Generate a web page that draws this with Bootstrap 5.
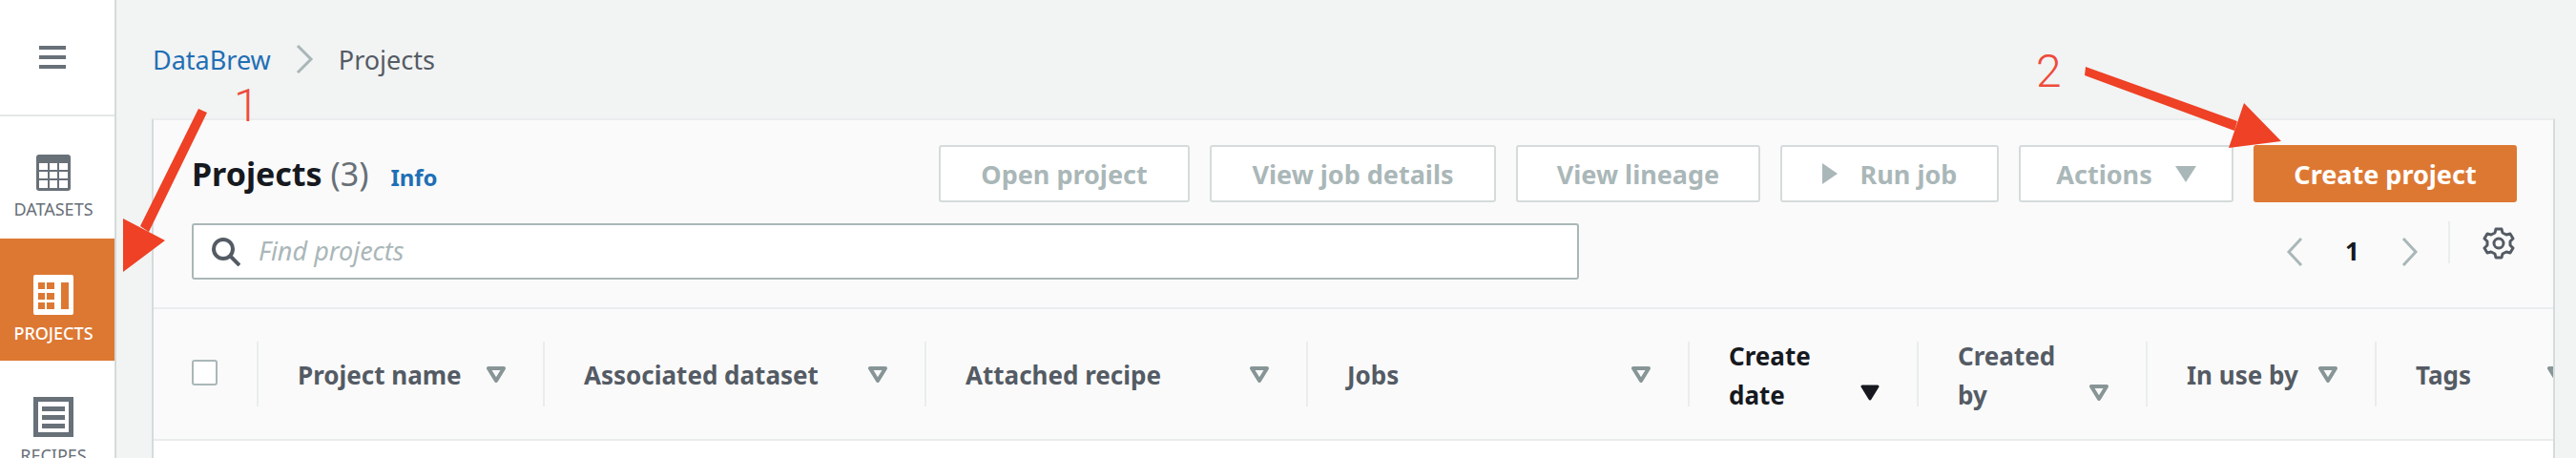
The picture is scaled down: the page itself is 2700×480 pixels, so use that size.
<!DOCTYPE html>
<html lang="en">
<head>
  <meta charset="UTF-8">
  <meta name="viewport" content="width=device-width, initial-scale=1.0">
  <title>Projects</title>
  <link rel="stylesheet" href="https://cdn.jsdelivr.net/npm/bootstrap@5.3.3/dist/css/bootstrap.min.css">
  <style>
    html, body { height: 480px; overflow: hidden; }
    body { font-family: "Noto Sans", "Open Sans", sans-serif; background: #f2f3f3; color: #16191f; position: relative; }
    .side { width: 122px; height: 480px; background: #fff; border-right: 2px solid #d5dbdb; flex: none; overflow: hidden; }
    .side-top { height: 122px; border-bottom: 2px solid #e4e7e7; padding-right: 10px; }
    .side-item { height: 128px; flex: none; color: #687078; font-size: 18px; line-height: 22px; padding: 38px 8px 0 0; }
    .side-item svg { display: block; margin-bottom: 8px; flex: none; }
    .side-first { padding-top: 40px; }
    .side-on { background: #dd7833; color: #fff; font-weight: 500; }
    .main-col { width: 2578px; min-width: 0; flex: none; }
    .crumbs { height: 124px; padding: 45px 0 0 38px; font-size: 27px; line-height: 36px; color: #545b64; }
    .crumbs a { color: #1f6fb5; text-decoration: none; }
    .crumb-gap { margin: 1px 26px 0 25px; flex: none; }
    .panel-box { margin: 0 22px 0 37px; height: 356px; background: #fff; border-left: 2px solid #d5dbdb; border-right: 2px solid #d5dbdb; border-top: 2px solid #eaeded; overflow: hidden; }
    .panel-head { height: 198px; background: #fafafa; border-bottom: 2px solid #eaeded; padding: 26px 40px 0 40px; }
    .title-txt { height: 60px; font-size: 34px; line-height: 60px; font-weight: 700; white-space: nowrap; }
    .title-txt span { font-weight: 400; color: #687078; }
    .info-link { font-size: 24px; font-weight: 700; color: #1f6fb5; text-decoration: none; margin-left: 23px; }
    .btn-row { gap: 21px; margin-right: -2px; }
    .btn-aws { height: 60px; flex: none; font-size: 27px; line-height: 1; font-weight: 700; padding: 0; border-radius: 3px; background: #fff; border: 2px solid #d5dbdb; color: #aab7b8; }
    .btn-aws:disabled { opacity: 1; background: #fff; border-color: #d5dbdb; color: #aab7b8; }
    .btn-make { background: #dd7833; border-color: #dd7833; color: #fff; }
    .btn-make:hover { background: #dd7833; border-color: #dd7833; color: #fff; }
    .find-box { width: 1454px; height: 59px; background: #fff; border: 2px solid #aab7b8; border-radius: 3px; padding-left: 19px; margin-top: 22px; }
    .find-box input { border: 0; outline: 0; background: transparent; width: 1300px; font-size: 27px; font-style: italic; color: #16191f; margin-left: 19px; padding: 0; }
    .find-box input::placeholder { color: #aab7b8; opacity: 1; }
    .pager { margin-top: 20px; font-size: 26px; font-weight: 700; line-height: 30px; }
    .pager-num { width: 101px; text-align: center; }
    .pager-sep { width: 2px; height: 44px; background: #eaeded; margin: 0 34px 0 30px; }
    .gear-pos { margin-top: 6px; }
    .head-row { height: 138px; background: #fafafa; border-bottom: 2px solid #eaeded; }
    .check-cell { width: 108px; flex: none; padding-left: 40px; }
    .check-box { width: 27px; height: 27px; background: #fff; border: 2px solid #aab7b8; border-radius: 3px; margin-top: -4px; }
    .col-cell { height: 68px; flex: none; border-left: 2px solid #eaeded; padding: 0 39px 0 41px; font-size: 26px; font-weight: 700; line-height: 41px; color: #545b64; white-space: nowrap; }
    .col-cell span { padding-top: 2px; }
    .col-on { color: #16191f; }
    .col-cell svg { flex: none; }
    .cell-two svg { margin-bottom: 6px; }
    .cell-two span { margin-bottom: -9px; }
    .w-300 { width: 300px; }
    .w-400 { width: 400px; }
    .w-240 { width: 240px; }
    .note-layer { position: absolute; left: 0; top: 0; width: 2700px; height: 480px; pointer-events: none; }
    .note-num { position: absolute; font-family: Roboto, "Liberation Sans", sans-serif; font-weight: 300; font-size: 48px; line-height: 48px; color: #ee4b3a; }
    .note-a { left: 245px; top: 87px; }
    .note-b { left: 2134px; top: 51px; }
  </style>
</head>
<body>
  <div class="d-flex">
    <div class="side">
      <div class="side-top d-flex align-items-center justify-content-center">
        <svg width="28" height="24" viewBox="0 0 28 24"><path fill="#687078" d="M0 0h28v4H0zM0 10h28v4H0zM0 20h28v4H0z"/></svg>
      </div>
      <div class="side-item side-first d-flex flex-column align-items-center">
        <svg width="36" height="38" viewBox="0 0 36 38"><rect width="36" height="38" rx="3" fill="#687078"/><path fill="#fff" d="M3 9h9v7H3zM14 9h8v7h-8zM24 9h9v7h-9zM3 18h9v7H3zM14 18h8v7h-8zM24 18h9v7h-9zM3 27h9v8H3zM14 27h8v8h-8zM24 27h9v8h-9z"/></svg>
        <span>DATASETS</span>
      </div>
      <div class="side-item side-on d-flex flex-column align-items-center">
        <svg width="42" height="42" viewBox="0 0 42 42"><rect width="42" height="42" rx="2" fill="#fff"/><path fill="#dd7833" d="M5 8h7v7H5zM14 8h8v7h-8zM5 19h7v7H5zM14 19h8v7h-8zM5 29h7v7H5zM14 29h8v7h-8zM29 8h8v28h-8z"/></svg>
        <span>PROJECTS</span>
      </div>
      <div class="side-item d-flex flex-column align-items-center">
        <svg width="42" height="42" viewBox="0 0 42 42"><path fill="#687078" fill-rule="evenodd" d="M0 0h42v42H0zM5 5v32h32V5z"/><path fill="#687078" d="M9 10h24v5H9zM9 19h24v5H9zM9 28h24v5H9z"/></svg>
        <span>RECIPES</span>
      </div>
    </div>
    <div class="main-col">
      <div class="crumbs d-flex">
        <a href="#">DataBrew</a>
        <svg class="crumb-gap" width="20" height="32" viewBox="0 0 20 32"><path d="M3 2l14 14L3 30" fill="none" stroke="#aab7b8" stroke-width="3"/></svg>
        <span>Projects</span>
      </div>
      <div class="panel-box">
        <div class="panel-head">
          <div class="d-flex justify-content-between">
            <div class="title-txt">Projects <span>(3)</span><a class="info-link" href="#">Info</a></div>
            <div class="d-flex btn-row">
              <button class="btn btn-aws" style="width:263px" disabled>Open project</button>
              <button class="btn btn-aws" style="width:300px" disabled>View job details</button>
              <button class="btn btn-aws" style="width:256px" disabled>View lineage</button>
              <button class="btn btn-aws d-flex align-items-center justify-content-center" style="width:229px" disabled>
                <svg class="me-4" width="16" height="22" viewBox="0 0 16 22"><path fill="#aab7b8" d="M0 0l16 11L0 22z"/></svg>Run job</button>
              <button class="btn btn-aws d-flex align-items-center justify-content-center" style="width:225px" disabled>Actions
                <svg class="ms-4" width="22" height="17" viewBox="0 0 22 17"><path fill="#aab7b8" d="M0 0h22L11 17z"/></svg></button>
              <button class="btn btn-aws btn-make" style="width:276px">Create project</button>
            </div>
          </div>
          <div class="d-flex justify-content-between">
            <div class="find-box d-flex align-items-center">
              <svg width="30" height="30" viewBox="0 0 30 30"><circle cx="12" cy="12" r="10" fill="none" stroke="#545b64" stroke-width="4"/><path d="M19 19l10 10" stroke="#545b64" stroke-width="4"/></svg>
              <input type="text" placeholder="Find projects">
            </div>
            <div class="pager d-flex align-items-start">
              <svg class="mt-3" width="20" height="32" viewBox="0 0 20 32"><path d="M17 2L4 16l13 14" fill="none" stroke="#aab7b8" stroke-width="3"/></svg>
              <div class="pager-num mt-3">1</div>
              <svg class="mt-3" width="20" height="32" viewBox="0 0 20 32"><path d="M3 2l13 14L3 30" fill="none" stroke="#aab7b8" stroke-width="3"/></svg>
              <div class="pager-sep"></div>
              <svg class="gear-pos" width="34" height="34" viewBox="0 0 34 34"><g fill="none" stroke="#545b64" stroke-width="3" stroke-linejoin="round"><path d="M14 2h6l1 4 4 2 4-1 3 5-3 3v4l3 3-3 5-4-1-4 2-1 4h-6l-1-4-4-2-4 1-3-5 3-3v-4L2 12l3-5 4 1 4-2z"/><circle cx="17" cy="17" r="5"/></g></svg>
            </div>
          </div>
        </div>
        <div class="head-row d-flex align-items-center">
          <div class="check-cell"><div class="check-box"></div></div>
          <div class="col-cell w-300 d-flex align-items-center justify-content-between"><span>Project name</span><svg width="20" height="17" viewBox="0 0 20 17"><path d="M2 2h16L10 15z" fill="none" stroke="#879596" stroke-width="4" stroke-linejoin="round"/></svg></div>
          <div class="col-cell w-400 d-flex align-items-center justify-content-between"><span>Associated dataset</span><svg width="20" height="17" viewBox="0 0 20 17"><path d="M2 2h16L10 15z" fill="none" stroke="#879596" stroke-width="4" stroke-linejoin="round"/></svg></div>
          <div class="col-cell w-400 d-flex align-items-center justify-content-between"><span>Attached recipe</span><svg width="20" height="17" viewBox="0 0 20 17"><path d="M2 2h16L10 15z" fill="none" stroke="#879596" stroke-width="4" stroke-linejoin="round"/></svg></div>
          <div class="col-cell w-400 d-flex align-items-center justify-content-between"><span>Jobs</span><svg width="20" height="17" viewBox="0 0 20 17"><path d="M2 2h16L10 15z" fill="none" stroke="#879596" stroke-width="4" stroke-linejoin="round"/></svg></div>
          <div class="col-cell cell-two col-on w-240 d-flex align-items-end justify-content-between"><span>Create<br>date</span><svg width="20" height="17" viewBox="0 0 20 17"><path d="M2 2h16L10 15z" fill="#16191f" stroke="#16191f" stroke-width="3" stroke-linejoin="round"/></svg></div>
          <div class="col-cell cell-two w-240 d-flex align-items-end justify-content-between"><span>Created<br>by</span><svg width="20" height="17" viewBox="0 0 20 17"><path d="M2 2h16L10 15z" fill="none" stroke="#879596" stroke-width="4" stroke-linejoin="round"/></svg></div>
          <div class="col-cell w-240 d-flex align-items-center justify-content-between"><span>In use by</span><svg width="20" height="17" viewBox="0 0 20 17"><path d="M2 2h16L10 15z" fill="none" stroke="#879596" stroke-width="4" stroke-linejoin="round"/></svg></div>
          <div class="col-cell w-240 d-flex align-items-center justify-content-between"><span>Tags</span><svg width="20" height="17" viewBox="0 0 20 17"><path d="M2 2h16L10 15z" fill="none" stroke="#879596" stroke-width="4" stroke-linejoin="round"/></svg></div>
        </div>
      </div>
    </div>
  </div>

  <!-- red annotations drawn over the screenshot -->
  <div class="note-layer">
    <svg width="2700" height="480" viewBox="0 0 2700 480">
      <path fill="#ee4125" d="M208 114l9 4-61 125-9-6zM129 229l44 23-44 33z"/>
      <path fill="#ee4125" d="M2186 70l-1 9 157 58 3-10zM2391 148l-39-40-16 47z"/>
    </svg>
    <span class="note-num note-a">1</span>
    <span class="note-num note-b">2</span>
  </div>
</body>
</html>
